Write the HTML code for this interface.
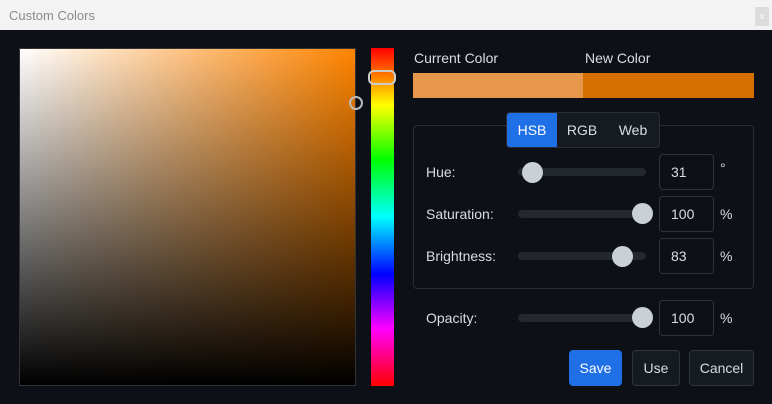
<!DOCTYPE html>
<html><head><style>
*{box-sizing:border-box;margin:0;padding:0}
body{width:772px;height:404px;background:#0d1017;font-family:"Liberation Sans",sans-serif;position:relative;overflow:hidden;color:#d8dde3}
.title{position:absolute;left:0;top:0;width:772px;height:30px;background:#f3f3f3;color:#8a8a8a;font-size:13px;padding:8px 0 0 9px}
.x{position:absolute;right:3px;top:7px;width:14px;height:19px;background:#dcdcdc;color:#fff;font-size:9px;text-align:center;line-height:19px}
.sq{position:absolute;left:19px;top:48px;width:337px;height:338px;background:linear-gradient(to bottom,rgba(0,0,0,0),#000),linear-gradient(to right,#fff,rgba(255,255,255,0)),#ff8400;border:1px solid #333}
.hue{position:absolute;left:371px;top:48px;width:23px;height:338px;background:linear-gradient(to bottom,#f00,#ff0 17%,#0f0 33%,#0ff 50%,#00f 67%,#f0f 83%,#f00)}
.ht{position:absolute;left:368px;top:70px;width:28px;height:15px;border:2px solid #ccc;border-radius:6px}
.sc{position:absolute;left:349px;top:96px;width:14px;height:14px;border:2px solid #bbb;border-radius:50%}
.lbl{position:absolute;font-size:14px;color:#d8dde3}
.sw{position:absolute;top:73px;height:25px}
.box{position:absolute;left:413px;top:125px;width:341px;height:164px;border:1px solid #2a2f37;border-radius:4px}
.tabs{position:absolute;left:506px;top:112px;width:154px;height:36px;background:#161a21;border:1px solid #2a2f37;border-radius:4px;display:flex;font-size:14px;overflow:hidden}
.tabs div{height:100%;line-height:34px;text-align:center}
.trk{position:absolute;left:518px;width:128px;height:8px;background:#23272e;border-radius:4px}
.th{position:absolute;width:21px;height:21px;border-radius:50%;background:#c9d0d6}
.in{position:absolute;left:659px;width:55px;height:36px;border:1px solid #2f343c;border-radius:4px;font-size:14px;padding-left:11px;line-height:34px}
.btn{position:absolute;top:350px;height:36px;border:1px solid #2f343c;background:#161a21;border-radius:4px;font-size:14px;text-align:center;line-height:34px}
</style></head><body>
<div class="title">Custom Colors<div class="x">x</div></div>
<div class="sq"></div><div class="sc"></div>
<div class="hue"></div><div class="ht"></div>
<div class="lbl" style="left:414px;top:50px">Current Color</div>
<div class="lbl" style="left:585px;top:50px">New Color</div>
<div class="sw" style="left:413px;width:170px;background:#e6974c"></div>
<div class="sw" style="left:583px;width:171px;background:#d46f00"></div>
<div class="box"></div>
<div class="tabs"><div style="width:50px;background:#1f6fe6;color:#fff">HSB</div><div style="width:50px">RGB</div><div style="width:52px">Web</div></div>

<div class="lbl" style="left:426px;top:164px">Hue:</div>
<div class="trk" style="top:168px"></div><div class="th" style="left:522px;top:162px"></div>
<div class="in" style="top:154px">31</div><div class="lbl" style="left:720px;top:160px">°</div>

<div class="lbl" style="left:426px;top:206px">Saturation:</div>
<div class="trk" style="top:210px"></div><div class="th" style="left:632px;top:203px"></div>
<div class="in" style="top:196px">100</div><div class="lbl" style="left:720px;top:206px">%</div>

<div class="lbl" style="left:426px;top:248px">Brightness:</div>
<div class="trk" style="top:252px"></div><div class="th" style="left:612px;top:246px"></div>
<div class="in" style="top:238px">83</div><div class="lbl" style="left:720px;top:248px">%</div>

<div class="lbl" style="left:426px;top:310px">Opacity:</div>
<div class="trk" style="top:314px"></div><div class="th" style="left:632px;top:307px"></div>
<div class="in" style="top:300px">100</div><div class="lbl" style="left:720px;top:310px">%</div>

<div class="btn" style="left:569px;width:53px;background:#1f6fe6;border-color:#1f6fe6;color:#fff">Save</div>
<div class="btn" style="left:632px;width:48px">Use</div>
<div class="btn" style="left:689px;width:65px">Cancel</div>
</body></html>
